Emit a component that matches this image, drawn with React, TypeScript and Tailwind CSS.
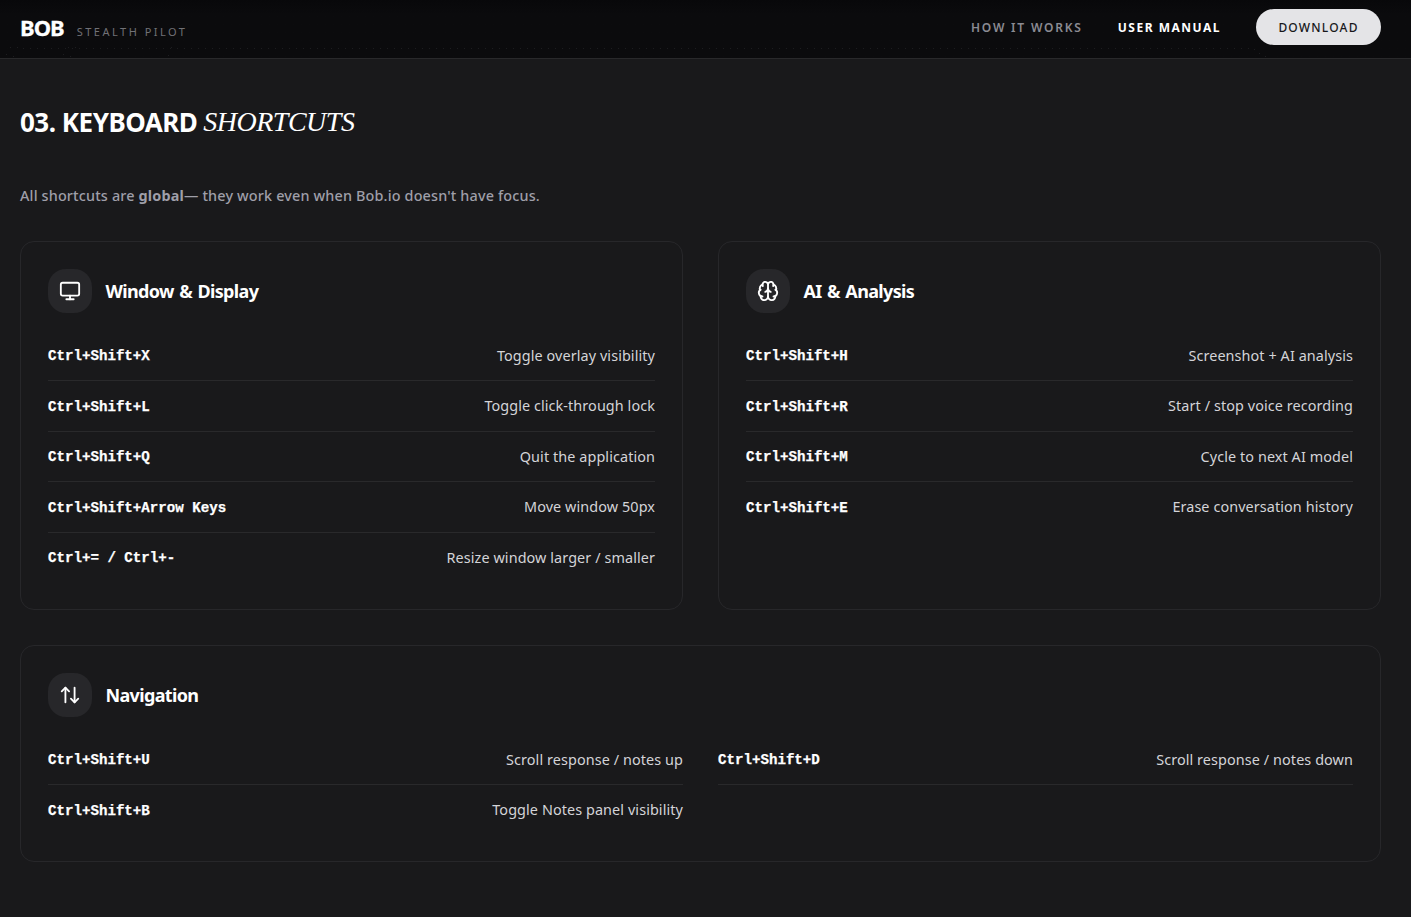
import type { ReactNode } from "react";
import { ArrowUpDown, Brain, Monitor, type LucideIcon } from "lucide-react";

type Shortcut = { keys: string; action: string };

const WINDOW_KEYS: Shortcut[] = [
  { keys: "Ctrl+Shift+X",          action: "Toggle overlay visibility" },
  { keys: "Ctrl+Shift+L",          action: "Toggle click-through lock" },
  { keys: "Ctrl+Shift+Q",          action: "Quit the application" },
  { keys: "Ctrl+Shift+Arrow Keys", action: "Move window 50px" },
  { keys: "Ctrl+= / Ctrl+-",       action: "Resize window larger / smaller" },
];

const AI_KEYS: Shortcut[] = [
  { keys: "Ctrl+Shift+H", action: "Screenshot + AI analysis" },
  { keys: "Ctrl+Shift+R", action: "Start / stop voice recording" },
  { keys: "Ctrl+Shift+M", action: "Cycle to next AI model" },
  { keys: "Ctrl+Shift+E", action: "Erase conversation history" },
];

const NAV_KEYS: Shortcut[] = [
  { keys: "Ctrl+Shift+U", action: "Scroll response / notes up" },
  { keys: "Ctrl+Shift+D", action: "Scroll response / notes down" },
  { keys: "Ctrl+Shift+B", action: "Toggle Notes panel visibility" },
];

// Stray dots around the ends of the dotted header line
const DOTS: [number, number][] = [
  [10, 47], [17, 47], [68, 47], [75, 47], [171, 47],
  [6, 54], [13, 56], [63, 54], [70, 56], [168, 55],
  [1254, 49], [1259, 53], [1265, 56],
];

function HeaderDots() {
  return (
    <svg className="pointer-events-none absolute inset-0 h-full w-full" fill="#1d1d20">
      <line x1="23" y1="48.5" x2="1250" y2="48.5" stroke="#1d1d20" strokeDasharray="1 6" />
      {DOTS.map(([x, y]) => <rect key={`${x}-${y}`} x={x} y={y} width="1" height="1" />)}
    </svg>
  );
}

function Row({ keys, action }: Shortcut) {
  return (
    <div className="flex h-[50.6px] items-center justify-between border-b border-[#29292b] last:h-[49.6px] last:border-b-0">
      <span className="pt-[2.6px] font-['Liberation_Mono',monospace] text-[14.15px] font-bold text-white [-webkit-text-stroke:0.25px_white]">
        {keys}
      </span>
      <span className="text-[14.4px] tracking-[0.09px] text-[#d4d4d8]">{action}</span>
    </div>
  );
}

function Card({ icon: Icon, title, className = "", children }: {
  icon: LucideIcon;
  title: string;
  className?: string;
  children: ReactNode;
}) {
  return (
    <div className={`rounded-[14px] border border-[#27272a] px-[27px] pt-[27px] ${className}`}>
      <div className="mb-[17.6px] flex items-center gap-[13.5px]">
        <div className="flex size-11 items-center justify-center rounded-[18px] bg-[#27272a]">
          <Icon className="size-[22px] text-white" strokeWidth={2} />
        </div>
        <h3 className="text-[18px] font-bold tracking-[-0.65px] text-white [word-spacing:1.4px]">{title}</h3>
      </div>
      {children}
    </div>
  );
}

export default function App() {
  return (
    <div className="h-[917px] overflow-hidden bg-[#19191b] font-['Noto_Sans','Open_Sans',sans-serif]">
      <header className="relative flex h-[59px] items-center justify-between border-b border-[#29292b] bg-linear-to-b from-[#08080a] to-[#0b0b0d] to-25% pr-[30px] pb-1 pl-5">
        <HeaderDots />
        <div className="flex items-baseline gap-[13px]">
          <span className="text-[22px] font-bold tracking-[-1px] text-white [-webkit-text-stroke:0.3px_white]">BOB</span>
          <span className="text-[11px] tracking-[2.5px] text-[#717176]">STEALTH PILOT</span>
        </div>
        <nav className="flex items-center text-[12px] font-semibold">
          <a className="mr-[35px] pt-0.5 tracking-[1.8px] text-[#8b8b93]">HOW IT WORKS</a>
          <a className="mr-[35px] pt-0.5 font-bold tracking-[1.5px] text-white">USER MANUAL</a>
          <a className="flex h-9 w-[125px] items-center justify-center rounded-full bg-[#e4e4e7] pt-0.5 font-medium tracking-[1.2px] text-[#18181b]">
            DOWNLOAD
          </a>
        </nav>
      </header>

      <main className="pt-[43px] pr-[30px] pl-5">
        <h2 className="flex h-10 items-center gap-1.5 text-[26px] font-bold tracking-[-0.5px] text-white">
          03. KEYBOARD
          <em className="font-['Liberation_Serif',serif] text-[28px] font-normal tracking-[-0.5px]">SHORTCUTS</em>
        </h2>
        <p className="mt-[42px] h-6 text-[14.4px] leading-6 font-medium tracking-[0.16px] text-[#9f9fa9]">
          All shortcuts are <strong className="font-bold">global</strong>— they work even when Bob.io doesn't have focus.
        </p>

        <div className="mt-[33px] grid grid-cols-2 gap-[35px]">
          <Card icon={Monitor} title="Window & Display" className="h-[369px]">
            {WINDOW_KEYS.map((s) => <Row key={s.keys} {...s} />)}
          </Card>
          <Card icon={Brain} title="AI & Analysis" className="h-[369px]">
            {AI_KEYS.map((s) => <Row key={s.keys} {...s} />)}
          </Card>
          <Card icon={ArrowUpDown} title="Navigation" className="col-span-2 h-[217px]">
            <div className="grid grid-cols-2 gap-x-[35px]">
              {NAV_KEYS.map((s) => <Row key={s.keys} {...s} />)}
            </div>
          </Card>
        </div>
      </main>
    </div>
  );
}
